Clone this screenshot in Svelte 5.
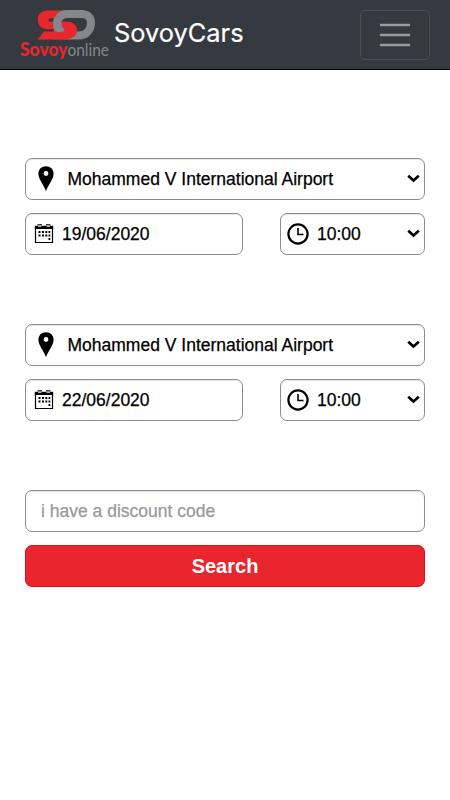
<script lang="ts">
  type Stop = { id: string; place: string; date: string; time: string };

  let stops: Stop[] = $state([
    { id: 'pickup', place: 'Mohammed V International Airport', date: '19/06/2020', time: '10:00' },
    { id: 'return', place: 'Mohammed V International Airport', date: '22/06/2020', time: '10:00' }
  ]);
  let discount = $state('');
</script>

{#snippet chevron()}
  <svg class="chevron" width="13" height="9" viewBox="0 0 13 9" fill="none" stroke="#000" stroke-width="2.7">
    <path d="M1.200 1.700 L6.500 6.500 L11.800 1.700" />
  </svg>
{/snippet}

<header class="navbar">
  <a class="brand" href="#home">
    <svg class="logo" width="90" height="54" viewBox="0 0 90 54">
      <path
        d="M48 .5H28C21.500 .5 17.800 4 17.800 9.500C17.800 15.500 21.500 19.300 28 19.300H44C46 19.300 46 21.500 44 21.500H24L17.500 29.500H44C52 29.500 57 26 57 20.500C57 15 52.500 11.800 46 11.800H30.500C27.800 11.800 27.800 8.300 30.500 8.300H40Z"
        fill="#e9252d"
      />
      <path
        d="M47 4H61.500C68 4 71 8 71 12.500C71 20 66.500 25.500 58.500 25.500H49C41.500 25.500 37.200 21.500 37.200 14.500C37.200 8 40.500 4 47 4Z"
        fill="none"
        stroke="#85878a"
        stroke-width="8"
      />
      <path
        d="M40 11.800H46C52.500 11.800 57 15 57 20.500C57 26 52 29.500 44 29.500H32V21.500H44C46 21.500 46 19.300 44 19.300H40Z"
        fill="#e9252d"
      />
      <path d="M41.500 10C40.800 14 42 17.500 45 20.200L38.500 22.500C33.500 19.500 32.300 14 34 8Z" fill="#85878a" />
      <text class="logo-bold" x="0" y="46.300" textLength="47.500" lengthAdjust="spacingAndGlyphs">Sovoy</text>
      <text class="logo-light" x="47.500" y="46.300" textLength="41.500" lengthAdjust="spacingAndGlyphs">online</text>
    </svg>
    <span class="title">SovoyCars</span>
  </a>
  <button class="toggler" type="button" aria-label="Toggle navigation">
    <svg width="38" height="38" viewBox="0 0 38 38" stroke="#999b9e" stroke-width="2.500" stroke-linecap="round">
      <path d="M5 9H33M5 19H33M5 29H33" />
    </svg>
  </button>
</header>

<main>
  {#each stops as stop (stop.id)}
    <section class="stop">
      <label class="field place">
        <svg class="pin" width="16" height="26" viewBox="0 0 16 26">
          <path
            fill-rule="evenodd"
            d="M8 .3C3.500 .3 .4 3.400 .4 7.700C.4 13 6 19.500 8 25.200C10 19.500 15.600 13 15.600 7.700C15.600 3.400 12.500 .3 8 .3ZM8 5.100A2.400 2.400 0 1 1 8 9.900A2.400 2.400 0 1 1 8 5.100Z"
          />
        </svg>
        <select bind:value={stop.place}>
          <option>Mohammed V International Airport</option>
        </select>
        {@render chevron()}
      </label>
      <div class="row">
        <label class="field date">
          <svg width="20" height="20" viewBox="0 0 20 20">
            <path d="M1.500 4V18.500H18.500V4" fill="none" stroke="#000" stroke-width="1.200" />
            <path d="M.8 1.800H19.200V5H.8Z" />
            <path d="M3.500 .8H8M12 .8H16.500" stroke="#000" stroke-width="1.200" />
            <path d="M4 2.200H7.500M12.500 2.200H16" stroke="#fff" stroke-width="1" />
            <path
              d="M4.500 8H6.500M8 8H10M11.300 8H13.300M14.500 8H16.300M4.500 11.500H6.500M8 11.500H10M11.300 11.500H13.300M14.500 11.500H16.300M14.500 15H16.300"
              stroke="#000"
              stroke-width="2"
            />
          </svg>
          <input type="text" bind:value={stop.date} />
        </label>
        <label class="field time">
          <svg width="22" height="22" viewBox="0 0 22 22" fill="none" stroke="#000">
            <circle cx="11" cy="11" r="9.600" stroke-width="2.200" />
            <path d="M11 5V11.500H16.500" stroke-width="1.600" />
          </svg>
          <select bind:value={stop.time}>
            <option>10:00</option>
          </select>
          {@render chevron()}
        </label>
      </div>
    </section>
  {/each}

  <section class="submit">
    <input class="field discount" type="text" placeholder="i have a discount code" bind:value={discount} />
    <button class="search" type="button">Search</button>
  </section>
</main>

<style>
  :global(body) {
    background: #fff;
    font-family: 'Liberation Sans', Arial, sans-serif;
  }

  .navbar {
    display: flex;
    align-items: center;
    justify-content: space-between;
    box-sizing: border-box;
    height: 70px;
    padding: 0 20px;
    background: #343a40;
    border-bottom: 1px solid #000;
  }

  .brand {
    display: flex;
    align-items: center;
    color: #fff;
    text-decoration: none;
  }

  .logo {
    margin-top: 4px;
    overflow: visible;
  }

  .logo-bold {
    font: 900 18px Lato, sans-serif;
    fill: #e9252d;
  }

  .logo-light {
    font: 400 18px Lato, sans-serif;
    fill: #85878a;
  }

  .title {
    margin: 0 0 3px 4px;
    font-family: Inter, sans-serif;
    font-size: 25.4px;
    line-height: 36px;
    -webkit-text-stroke: 0.2px;
  }

  .toggler {
    display: flex;
    align-items: center;
    justify-content: center;
    box-sizing: border-box;
    width: 70px;
    height: 50px;
    padding: 0;
    background: transparent;
    border: 1px solid #4b5054;
    border-radius: 5px;
  }

  main {
    padding: 87.5px 25px 0;
  }

  .stop {
    margin-bottom: 69px;
  }

  .row {
    display: flex;
    justify-content: space-between;
    margin-top: 13px;
  }

  .field {
    display: flex;
    align-items: center;
    box-sizing: border-box;
    height: 42px;
    background: #fff;
    border: 1px solid #8c8c8c;
    border-radius: 7px;
    box-shadow: inset 0 1px 1px rgba(0, 0, 0, 0.1);
  }

  .field svg {
    flex-shrink: 0;
  }

  .place {
    padding: 0 4px 0 12px;
  }

  .date {
    width: 217.5px;
    padding-left: 8px;
  }

  .time {
    width: 145px;
    padding: 0 4px 0 6px;
  }

  select,
  input {
    flex: 1;
    min-width: 0;
    padding: 0;
    color: #000;
    background: transparent;
    border: 0;
    outline: 0;
    appearance: none;
    font-family: inherit;
    font-size: 17.5px;
    -webkit-text-stroke: 0.25px;
  }

  .place select {
    margin-left: 13.5px;
  }

  .date input,
  .time select {
    margin-left: 8px;
  }

  .date input {
    padding-top: 2px;
  }

  .discount {
    width: 100%;
    padding: 2px 15px 0;
    border: 1px solid #8c8c8c;
  }

  .discount::placeholder {
    color: #999;
    opacity: 1;
  }

  .search {
    display: block;
    width: 100%;
    height: 42px;
    margin-top: 13px;
    padding: 1px 0 0;
    color: #fff;
    background: #e9252d;
    border: 1px solid #df101a;
    border-radius: 7px;
    font-family: inherit;
    font-size: 20px;
    font-weight: 700;
  }
</style>
